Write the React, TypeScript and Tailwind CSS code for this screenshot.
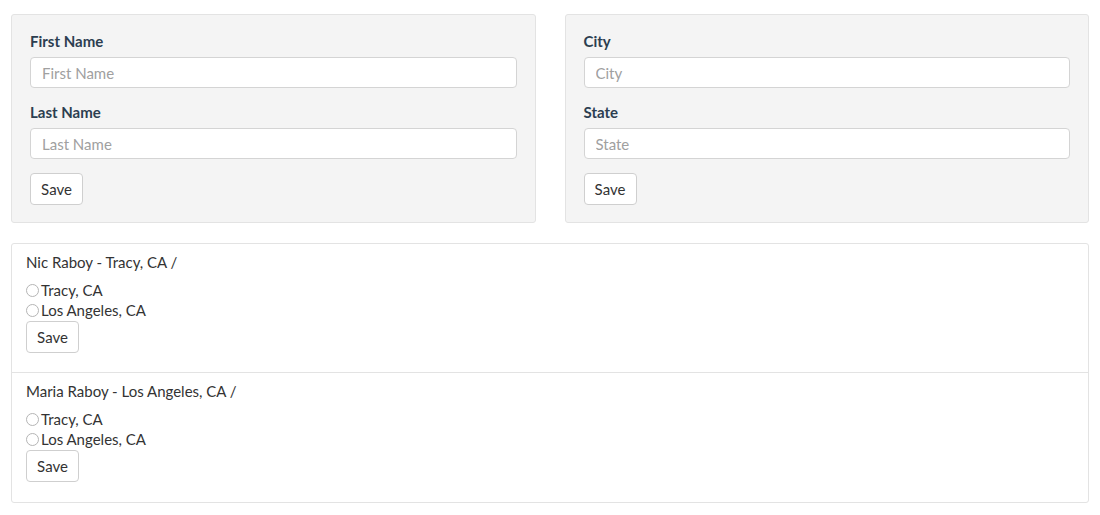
import React from "react";

function Field({ label }: { label: string }) {
  return (
    <div className="mb-[14px]">
      <div className="text-[15px] font-bold text-[#2c3e50] leading-[20px] mb-[6px]">{label}</div>
      <input
        placeholder={label}
        className="w-full h-[31px] rounded-[4px] border border-[#d4d4d4] bg-white px-[11px] text-[15px] placeholder:text-[#a0a0a0] outline-none"
      />
    </div>
  );
}

function SaveBtn() {
  return (
    <button className="h-[32px] w-[53px] rounded-[4px] border border-[#cfcfcf] bg-white text-[15px] text-[#333]">
      Save
    </button>
  );
}

function FormPanel({ a, b }: { a: string; b: string }) {
  return (
    <div className="flex-1 h-[209px] rounded-[3px] border border-[#e3e3e3] bg-[#f4f4f4] px-[18px] pt-[16px]">
      <Field label={a} />
      <Field label={b} />
      <SaveBtn />
    </div>
  );
}

function Row({ title, last }: { title: string; last?: boolean }) {
  return (
    <div className={"h-[129px] px-[14px] pt-[8px] " + (last ? "" : "border-b border-[#e3e3e3]")}>
      <div className="text-[15px] leading-[20px] text-[#333] mb-[8px]">{title}</div>
      {["Tracy, CA", "Los Angeles, CA"].map((c) => (
        <label key={c} className="flex items-center h-[20px] text-[15px] text-[#333]">
          <span className="w-[13px] h-[13px] rounded-full border border-[#b5b5b5] bg-white mr-[2px]" />
          {c}
        </label>
      ))}
      <div className="mt-[1px]">
        <SaveBtn />
      </div>
    </div>
  );
}

export default function App() {
  return (
    <div className="w-[1100px] h-[515px] bg-white px-[11px] pt-[14px]" style={{ fontFamily: "Lato, 'Open Sans', sans-serif" }}>
      <div className="flex gap-[29px]">
        <FormPanel a="First Name" b="Last Name" />
        <FormPanel a="City" b="State" />
      </div>
      <div className="mt-[20px] rounded-[3px] border border-[#e3e3e3]">
        <Row title="Nic Raboy - Tracy, CA /" />
        <Row title="Maria Raboy - Los Angeles, CA /" last />
      </div>
    </div>
  );
}
